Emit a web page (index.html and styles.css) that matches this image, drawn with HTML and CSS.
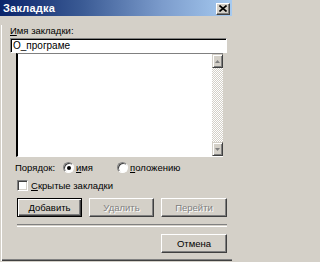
FILE: index.html
```html
<!DOCTYPE html>
<html lang="ru">
<head>
<meta charset="utf-8">
<title>Закладка</title>
<link rel="stylesheet" href="styles.css">
</head>
<body>
<div class="window">
  <div class="titlebar">
    <span class="title">Закладка</span>
    <span class="close">
      <svg width="8" height="7" viewBox="0 0 8 7"><path d="M0.5 0.5 L7.5 6.5 M7.5 0.5 L0.5 6.5" stroke="#000" stroke-width="1.6" fill="none"/></svg>
    </span>
  </div>
  <div class="content">
    <div class="label"><u>И</u>мя закладки:</div>
    <div class="input">О_програме</div>
    <div class="list">
      <div class="list-area"></div>
      <div class="scrollbar">
        <div class="sb-btn"><svg width="5" height="3" viewBox="0 0 5 3"><path d="M2.5 0 L5 3 L0 3 Z" fill="#808080"/></svg></div>
        <div class="sb-track"></div>
        <div class="sb-btn"><svg width="5" height="3" viewBox="0 0 5 3"><path d="M0 0 L5 0 L2.5 3 Z" fill="#808080"/></svg></div>
      </div>
    </div>
    <div class="sort-row">
      <span class="sort-label">Порядок:</span>
      <span class="radio checked"></span>
      <span class="opt opt-name"><u>и</u>мя</span>
      <span class="radio"></span>
      <span class="opt"><u>п</u>оложению</span>
    </div>
    <div class="check-row">
      <span class="checkbox"></span>
      <span class="opt"><u>С</u>крытые закладки</span>
    </div>
    <div class="btn-row">
      <div class="btn default"><span><u>Д</u>обавить</span></div>
      <div class="btn disabled"><span>Удалить</span></div>
      <div class="btn disabled"><span>Перейти</span></div>
    </div>
    <div class="sep"></div>
    <div class="cancel-row">
      <div class="btn"><span>Отмена</span></div>
    </div>
  </div>
</div>
</body>
</html>
```

FILE: styles.css
```css
html, body {
  margin: 0;
  padding: 0;
  background: #d4d0c8;
}
body {
  font-family: "Liberation Sans", Arial, sans-serif;
  font-size: 9.5px;
  color: #000;
}
u { text-decoration: underline; text-underline-offset: 1px; }

.window {
  width: 232px;
  height: 261px;
  box-sizing: border-box;
  background: #d4d0c8;
  border-bottom: 1px solid #404040;
  box-shadow: inset 0 -1px #808080;
  position: relative;
}
.titlebar {
  height: 16px;
  display: flex;
  align-items: center;
  justify-content: space-between;
  padding: 0 2px 0 3px;
  background: linear-gradient(to right, #0a246a 0%, #3a5a94 35%, #7c9ccc 70%, #a6caf0 100%);
}
.title {
  color: #fff;
  font-weight: bold;
  font-size: 11px;
  letter-spacing: 0.2px;
}
.close {
  width: 14px;
  height: 12px;
  box-sizing: border-box;
  background: #d4d0c8;
  border: 1px solid;
  border-color: #fff #404040 #404040 #fff;
  box-shadow: inset -1px -1px #808080;
  display: flex;
  align-items: center;
  justify-content: center;
  margin-top: 1px;
}
.content {
  border-left: 1px solid #d4d0c8;
  box-shadow: inset 1px 0 #fff;
  margin-left: 0;
  padding-left: 1px;
  height: 244px;
  box-sizing: border-box;
}
.label {
  margin: 9px 0 0 8px;
  height: 11px;
  line-height: 11px;
}
.input {
  margin: 2px 0 0 8px;
  width: 217px;
  height: 15px;
  box-sizing: border-box;
  background: #fff;
  border: 1px solid;
  border-color: #808080 #fff #fff #808080;
  box-shadow: inset 1px 1px #000;
  padding: 0 0 0 2px;
  font-size: 10px;
  line-height: 13px;
}
.list {
  margin: 0 0 0 14px;
  width: 207px;
  height: 104px;
  box-sizing: border-box;
  display: flex;
  background: #fff;
  border-left: 2px solid #000;
  border-top: 1px solid #808080;
  border-bottom: 1px solid #fff;
}
.list-area { flex: 1; }
.scrollbar {
  width: 11px;
  display: flex;
  flex-direction: column;
  margin-right: 0;
}
.sb-btn {
  width: 11px;
  height: 14px;
  box-sizing: border-box;
  background: #d4d0c8;
  border: 1px solid;
  border-color: #d4d0c8 #404040 #404040 #d4d0c8;
  box-shadow: inset 1px 1px #fff, inset -1px -1px #808080;
  display: flex;
  align-items: center;
  justify-content: center;
}
.sb-track {
  flex: 1;
  background: repeating-conic-gradient(#d4d0c8 0 25%, #fff 0 50%) 0 0 / 2px 2px;
}
.sort-row {
  margin: 5px 0 0 13px;
  height: 11px;
  display: flex;
  align-items: center;
}
.sort-label { width: 48px; }
.radio {
  width: 11px;
  height: 11px;
  box-sizing: border-box;
  border-radius: 50%;
  background: #fff;
  border: 1px solid;
  border-color: #808080 #fff #fff #808080;
  box-shadow: inset 1px 1px #404040;
  display: flex;
  align-items: center;
  justify-content: center;
}
.radio.checked::after {
  content: "";
  width: 4px;
  height: 4px;
  border-radius: 50%;
  background: #000;
}
.opt { margin-left: 2px; }
.opt-name { width: 41px; }
.check-row {
  margin: 6px 0 0 15px;
  height: 12px;
  display: flex;
  align-items: center;
}
.checkbox {
  width: 11px;
  height: 11px;
  box-sizing: border-box;
  background: #fff;
  border: 1px solid;
  border-color: #808080 #fff #fff #808080;
  box-shadow: inset 1px 1px #404040, inset -1px -1px #d4d0c8;
  margin-right: 1px;
}
.btn-row {
  margin: 7px 0 0 15px;
  display: flex;
  gap: 7px;
}
.btn {
  width: 65px;
  height: 19px;
  box-sizing: border-box;
  background: #d4d0c8;
  border: 1px solid;
  border-color: #fff #404040 #404040 #fff;
  box-shadow: inset -1px -1px #808080;
  display: flex;
  align-items: center;
  justify-content: center;
}
.btn.default {
  border: 1px solid #000;
  box-shadow: inset 1px 1px #fff, inset -1px -1px #404040, inset -2px -2px #808080;
}
.btn.disabled span {
  color: #808080;
  text-shadow: 1px 1px #fff;
}
.btn:nth-child(3) { width: 66px; }
.sep {
  margin: 7px 0 0 15px;
  width: 210px;
  height: 1px;
  border-top: 1px solid #808080;
  border-bottom: 1px solid #fff;
}
.cancel-row {
  margin: 7px 0 0 159px;
}
.cancel-row .btn { width: 66px; height: 19px; }
```
